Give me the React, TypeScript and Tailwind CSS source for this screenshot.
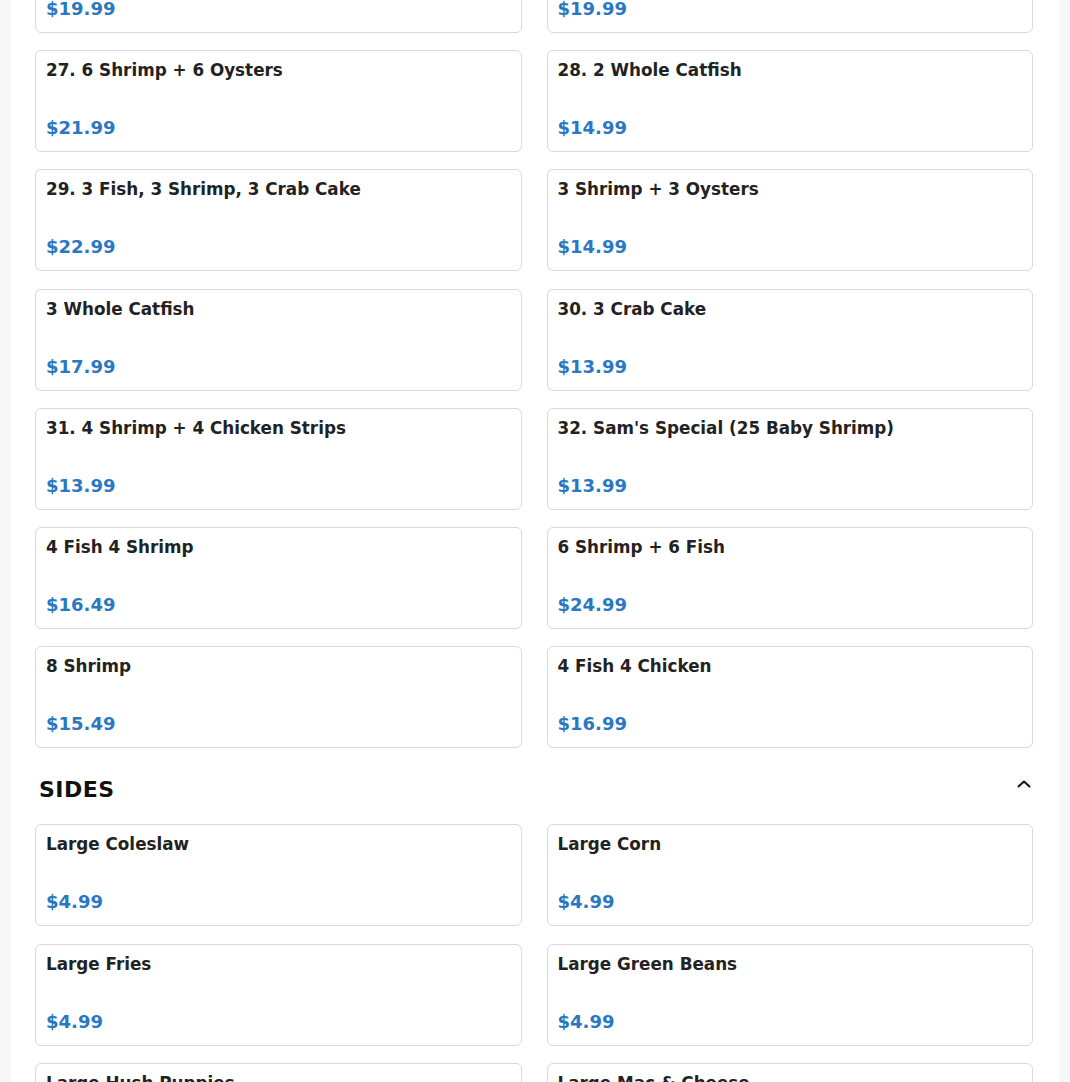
import React from "react";

type Item = { name: string; price: string };

const top: Item[] = [
  { name: "26. 4 Shrimp + 4 Oysters", price: "$19.99" },
  { name: "26. 10 Shrimp", price: "$19.99" },
];

const combos: Item[] = [
  { name: "27. 6 Shrimp + 6 Oysters", price: "$21.99" },
  { name: "28. 2 Whole Catfish", price: "$14.99" },
  { name: "29. 3 Fish, 3 Shrimp, 3 Crab Cake", price: "$22.99" },
  { name: "3 Shrimp + 3 Oysters", price: "$14.99" },
  { name: "3 Whole Catfish", price: "$17.99" },
  { name: "30. 3 Crab Cake", price: "$13.99" },
  { name: "31. 4 Shrimp + 4 Chicken Strips", price: "$13.99" },
  { name: "32. Sam's Special (25 Baby Shrimp)", price: "$13.99" },
  { name: "4 Fish 4 Shrimp", price: "$16.49" },
  { name: "6 Shrimp + 6 Fish", price: "$24.99" },
  { name: "8 Shrimp", price: "$15.49" },
  { name: "4 Fish 4 Chicken", price: "$16.99" },
];

const sides: Item[] = [
  { name: "Large Coleslaw", price: "$4.99" },
  { name: "Large Corn", price: "$4.99" },
  { name: "Large Fries", price: "$4.99" },
  { name: "Large Green Beans", price: "$4.99" },
  { name: "Large Hush Puppies", price: "$4.99" },
  { name: "Large Mac & Cheese", price: "$4.99" },
];

function Card({ item }: { item: Item }) {
  return (
    <div className="h-[102px] rounded-md border border-[#d9d9d9] bg-white px-[10px] pt-[7px] pb-[11px] flex flex-col justify-between">
      <div className="text-[16.8px] leading-[24px] font-bold text-[#222]">{item.name}</div>
      <div className="text-[18px] leading-[24px] font-bold text-[#2a78c2]">{item.price}</div>
    </div>
  );
}

export default function App() {
  return (
    <div
      className="min-h-screen bg-[#f7f7f7] overflow-hidden"
      style={{ fontFamily: '"DejaVu Sans", sans-serif' }}
    >
      <div className="mx-auto max-w-[1048px] bg-white pl-6 pr-[26px] h-[1082px] overflow-hidden">
        <div className="-mt-[69px]">
          <div className="grid grid-cols-2 gap-x-[25px] gap-y-[17.2px]">
            {top.map((it, i) => (
              <Card key={"t" + i} item={it} />
            ))}
            {combos.map((it, i) => (
              <Card key={"c" + i} item={it} />
            ))}
          </div>
          <div className="flex items-center justify-between pl-1 pr-0 pt-[27px] pb-[19px]">
            <h2 className="text-[22px] leading-[30px] font-bold text-[#111] tracking-[0.5px]">SIDES</h2>
            <svg width="16" height="10" viewBox="0 0 16 10" fill="none" stroke="#111" strokeWidth="2" strokeLinecap="round" strokeLinejoin="round" className="-mt-[13px] mr-[1px]">
              <path d="M2.5 7.5L8 2.5l5.5 5" />
            </svg>
          </div>
          <div className="grid grid-cols-2 gap-x-[25px] gap-y-[17.5px]">
            {sides.map((it, i) => (
              <Card key={"s" + i} item={it} />
            ))}
          </div>
        </div>
      </div>
    </div>
  );
}
